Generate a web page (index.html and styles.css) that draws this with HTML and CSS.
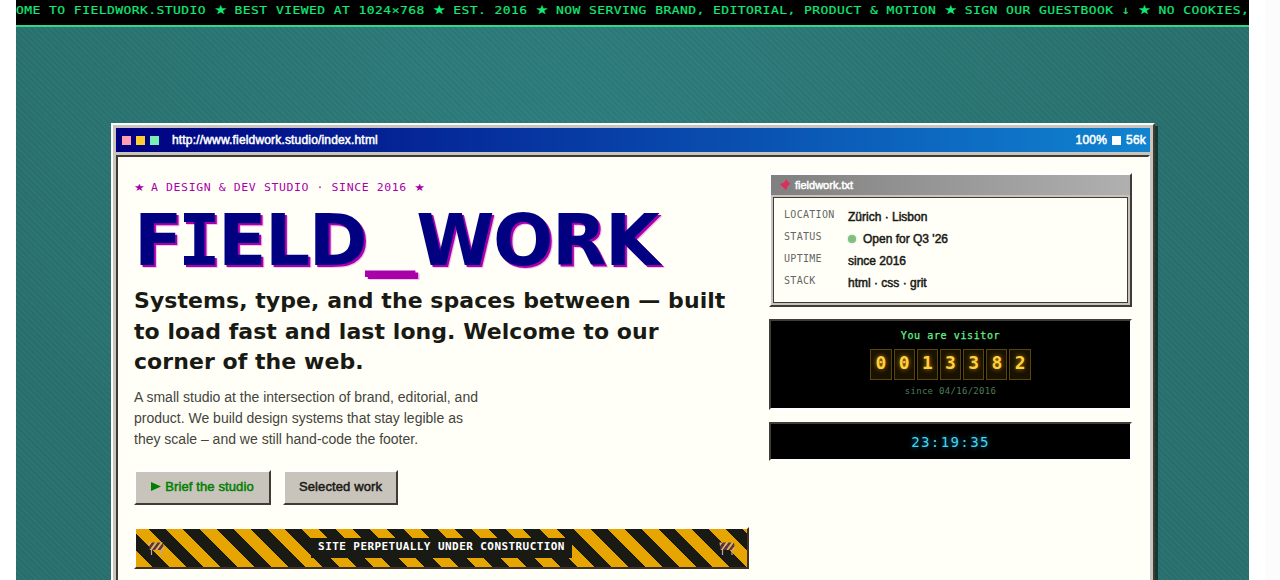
FILE: index.html
```html
<!DOCTYPE html>
<html lang="en">
<head>
<meta charset="utf-8">
<title>Fieldwork Studio</title>
<link rel="stylesheet" href="styles.css">
</head>
<body>
<div class="stage">
  <div class="ticker"><div class="track">OME TO FIELDWORK.STUDIO <i>★</i> BEST VIEWED AT 1024×768 <i>★</i> EST. 2016 <i>★</i> NOW SERVING BRAND, EDITORIAL, PRODUCT &amp; MOTION <i>★</i> SIGN OUR GUESTBOOK ↓ <i>★</i> NO COOKIES,</div></div>
  <main class="window">
    <header class="titlebar">
      <span class="dots"><b class="pink"></b><b class="gold"></b><b class="mint"></b></span>
      <span class="url">http://www.fieldwork.studio/index.html</span>
      <span class="speed">100% <b></b> 56k</span>
    </header>
    <div class="page">
      <section class="hero">
        <div class="eyebrow"><i>★</i> A DESIGN &amp; DEV STUDIO · SINCE 2016 <i>★</i></div>
        <h1>F<span class="slab">I</span>ELD<span class="under">_</span>WORK</h1>
        <h2>Systems, type, and the spaces between — built<br>to load fast and last long. Welcome to our<br>corner of the web.</h2>
        <p class="lead">A small studio at the intersection of brand, editorial, and<br>product. We build design systems that stay legible as<br>they scale – and we still hand-code the footer.</p>
        <div class="actions">
          <a class="btn go"><svg width="10" height="9" viewBox="0 0 10 9"><path d="M0 0L10 4.5L0 9Z" fill="#008000"/></svg><span>Brief the studio</span></a>
          <a class="btn work"><span>Selected work</span></a>
        </div>
        <div class="construction">
          <svg class="barrier" width="16" height="16" viewBox="0 0 16 16"><path d="M3.5 9V15M13 9V15" stroke="#b9a6ae" stroke-width="1.2"/><path d="M0.5 2.5H4L1 6.5ZM7 2.5H9.5L4 10H1.5ZM12.5 2.5H15L9.5 10H7ZM15.5 6V9L14.5 10H12.5Z" fill="#e0ad74"/><path d="M4 2.5H7L1.5 10L1 6.5ZM9.5 2.5H12.5L7 10H4ZM15 2.5L15.5 6L12.5 10H9.5Z" fill="#56363a"/></svg>
          <span><em>SITE PERPETUALLY UNDER CONSTRUCTION</em></span>
          <svg class="barrier" width="16" height="16" viewBox="0 0 16 16"><path d="M3.5 9V15M13 9V15" stroke="#b9a6ae" stroke-width="1.2"/><path d="M0.5 2.5H4L1 6.5ZM7 2.5H9.5L4 10H1.5ZM12.5 2.5H15L9.5 10H7ZM15.5 6V9L14.5 10H12.5Z" fill="#e0ad74"/><path d="M4 2.5H7L1.5 10L1 6.5ZM9.5 2.5H12.5L7 10H4ZM15 2.5L15.5 6L12.5 10H9.5Z" fill="#56363a"/></svg>
        </div>
      </section>
      <aside class="side">
        <div class="card">
          <div class="cardbar"><svg width="12" height="12" viewBox="0 0 12 12"><path d="M0.5 11.5L4 8" stroke="#b07886"/><path d="M6.8 0.3L11.5 5L10 5.7L8 8.2L7.7 10.2L6.5 10.7L1.3 5.5L2 4.4L4.2 4L6.3 2Z" fill="#dd2e5c"/></svg><span>fieldwork.txt</span></div>
          <dl class="facts">
            <dt>LOCATION</dt><dd>Zürich · Lisbon</dd>
            <dt>STATUS</dt><dd class="status"><b></b>Open for Q3 '26</dd>
            <dt>UPTIME</dt><dd>since 2016</dd>
            <dt>STACK</dt><dd>html · css · grit</dd>
          </dl>
        </div>
        <div class="counter">
          <div class="visitor">You are visitor</div>
          <div class="digits"><b>0</b><b>0</b><b>1</b><b>3</b><b>3</b><b>8</b><b>2</b></div>
          <div class="since">since 04/16/2016</div>
        </div>
        <div class="clock">23:19:35</div>
      </aside>
    </div>
  </main>
</div>
</body>
</html>
```
FILE: styles.css
```css
* { box-sizing: border-box; }
html { overflow: hidden; }
body {
  margin: 0;
  height: 580px;
  overflow: hidden;
  background: linear-gradient(90deg, #fff 0 1265px, #fcfcfd 1265px);
  font-family: "Liberation Sans", sans-serif;
  color: #1a1a14;
}
.stage {
  margin-left: 16px;
  width: 1233px;
  height: 580px;
  overflow: hidden;
  background:
    repeating-linear-gradient(45deg, rgba(0,0,0,.05) 0 2px, transparent 2px 4px),
    radial-gradient(ellipse 600px 480px at 45% 22%, #308080, #2b7472 100%);
}
.ticker {
  height: 27px;
  overflow: hidden;
  background: #000;
  border-bottom: 2px solid #33d684;
}
.track {
  white-space: nowrap;
  font: 13px/21px "DejaVu Sans Mono", monospace;
  letter-spacing: .44px;
  color: #14e878;
  -webkit-text-stroke: .2px currentColor;
  transform: scaleY(.87);
}
.track i, .eyebrow i {
  display: inline-block;
  font-family: "DejaVu Sans", sans-serif;
  font-style: normal;
  line-height: 1;
  letter-spacing: 0;
}
.track i { width: 11.9px; font-size: 14px; }
.window {
  width: 1044px;
  height: 700px;
  margin: 96px 0 0 95px;
  padding: 3px;
  background: #c8c4be;
  border: 2px solid;
  border-color: #fff #403c34 #403c34 #fff;
  box-shadow: 3px 3px 0 rgba(0,0,0,.5);
}
.titlebar {
  display: flex;
  align-items: center;
  height: 24px;
  padding: 0 4px 0 6px;
  background: linear-gradient(90deg, #000080, #1084d0);
  color: #fff;
  font-size: 12px;
}
.dots { display: flex; gap: 5px; margin-right: 13px; }
.dots b { width: 9px; height: 9px; }
.pink { background: #ff9eb0; }
.gold { background: #ffcc33; }
.mint { background: #78efb4; }
.url, .speed, .btn, .facts dd, .cardbar { -webkit-text-stroke: .5px currentColor; }
.url { letter-spacing: .17px; }
.speed { margin-left: auto; display: flex; align-items: center; gap: 5px; letter-spacing: .2px; }
.speed b { width: 9px; height: 9px; background: #fff; }
.page {
  display: grid;
  grid-template-columns: 615px 363px;
  column-gap: 20px;
  height: 600px;
  margin-top: 3px;
  padding: 16px;
  background: #fffff8;
  border: 2px solid;
  border-color: #403c34 #fff #fff #403c34;
}
.eyebrow {
  padding-top: 6px;
  height: 28px;
  font: 11.5px/18px "DejaVu Sans Mono", monospace;
  letter-spacing: .6px;
  color: #a0a;
  white-space: nowrap;
  transform: scaleY(.87);
}
.eyebrow i { width: 9.5px; font-size: 12px; }
h1 {
  margin: 0;
  height: 85px;
  font: bold 71px/80px "DejaVu Sans", sans-serif;
  letter-spacing: -1.5px;
  color: #000080;
  text-shadow: 2px 2px 0 #a0a, 3px 3px 0 #ecc6ea;
  white-space: nowrap;
}
.slab {
  display: inline-block;
  width: 37px;
  text-indent: -3px;
  font-family: "DejaVu Sans Mono", monospace;
}
.under {
  display: inline-block;
  width: 50px;
  line-height: 1;
  color: #a0a;
  transform: translate(-1px, -5px) scaleX(1.42);
  transform-origin: left;
}
h2 {
  margin: 0;
  font: bold 22px/30.5px "DejaVu Sans", sans-serif;
  letter-spacing: .06px;
  white-space: nowrap;
}
.lead {
  margin: 9.5px 0 0;
  font-size: 14px;
  line-height: 21px;
  color: #44443c;
  white-space: nowrap;
}
.actions { display: flex; gap: 12px; margin-top: 20px; }
.btn {
  display: flex;
  align-items: center;
  justify-content: center;
  gap: 4px;
  height: 35px;
  padding-bottom: 2px;
  background: #c8c4bc;
  border: 2px solid;
  border-color: #fff #403c34 #403c34 #fff;
  font-size: 13px;
  letter-spacing: .12px;
  white-space: nowrap;
}
.go { width: 137px; color: #008000; }
.work { width: 115px; }
.construction {
  display: flex;
  align-items: center;
  justify-content: space-between;
  height: 42px;
  margin-top: 22px;
  padding: 0 12px;
  background: repeating-linear-gradient(45deg, #e6a500 0 12px, #1a1a14 12px 24px) padding-box;
  border: 2px solid;
  border-color: #fff #403028 #403028 #fff;
}
.construction span {
  width: 261px;
  height: 20px;
  background: #1a1a14;
}
.construction em {
  display: block;
  color: #fff;
  text-align: center;
  font: bold 11px/17px "DejaVu Sans Mono", monospace;
  letter-spacing: .43px;
  white-space: nowrap;
  transform: scaleY(.88);
}
.side { display: flex; flex-direction: column; }
.card {
  height: 134px;
  background: #c8c4bc;
  border: 2px solid;
  border-color: #fff #403c34 #403c34 #fff;
}
.cardbar {
  display: flex;
  align-items: center;
  gap: 4px;
  height: 20px;
  padding-left: 8px;
  background: linear-gradient(90deg, #808080, #b0b0b0);
  color: #fff;
  font-size: 11px;
}
.facts {
  display: grid;
  grid-template-columns: 64px 1fr;
  grid-auto-rows: 22px;
  margin: 2px 2px 0;
  height: 106px;
  padding: 8px 10px;
  background: #fffff8;
  border: 1px solid #403c34;
}
.facts dt {
  font: 10px/18px "DejaVu Sans Mono", monospace;
  letter-spacing: .3px;
  color: #666;
}
.facts dd {
  display: flex;
  align-items: center;
  margin: 0;
  font-size: 12px;
  white-space: nowrap;
}
.status b {
  width: 8px;
  height: 8px;
  margin-right: 7px;
  border-radius: 50%;
  background: #80bf80;
  box-shadow: 0 0 2px #a5cfa5;
}
.counter, .clock {
  background: #000;
  border: 2px solid;
  border-color: #403c38 #fff #fff #403c38;
  text-align: center;
  font-family: "DejaVu Sans Mono", monospace;
}
.counter { height: 91px; margin-top: 12px; }
.visitor {
  height: 28px;
  padding-top: 6px;
  font-size: 10px;
  line-height: 18px;
  letter-spacing: .6px;
  color: #66f28a;
  -webkit-text-stroke: .25px currentColor;
}
.digits { display: flex; justify-content: center; gap: 2px; }
.digits b {
  width: 21.2px;
  height: 31px;
  background: #191200;
  border: 1px solid #59440c;
  color: #ffd040;
  font-size: 18px;
  line-height: 26px;
  text-shadow: 0 0 5px #c78500;
}
.since {
  font-size: 9px;
  line-height: 22px;
  letter-spacing: .3px;
  color: #4c7c58;
}
.clock {
  height: 39px;
  margin-top: 12px;
  font-size: 14px;
  line-height: 36px;
  letter-spacing: 1.4px;
  color: #44d7f5;
  text-shadow: 0 0 5px #087b9d;
}
```
